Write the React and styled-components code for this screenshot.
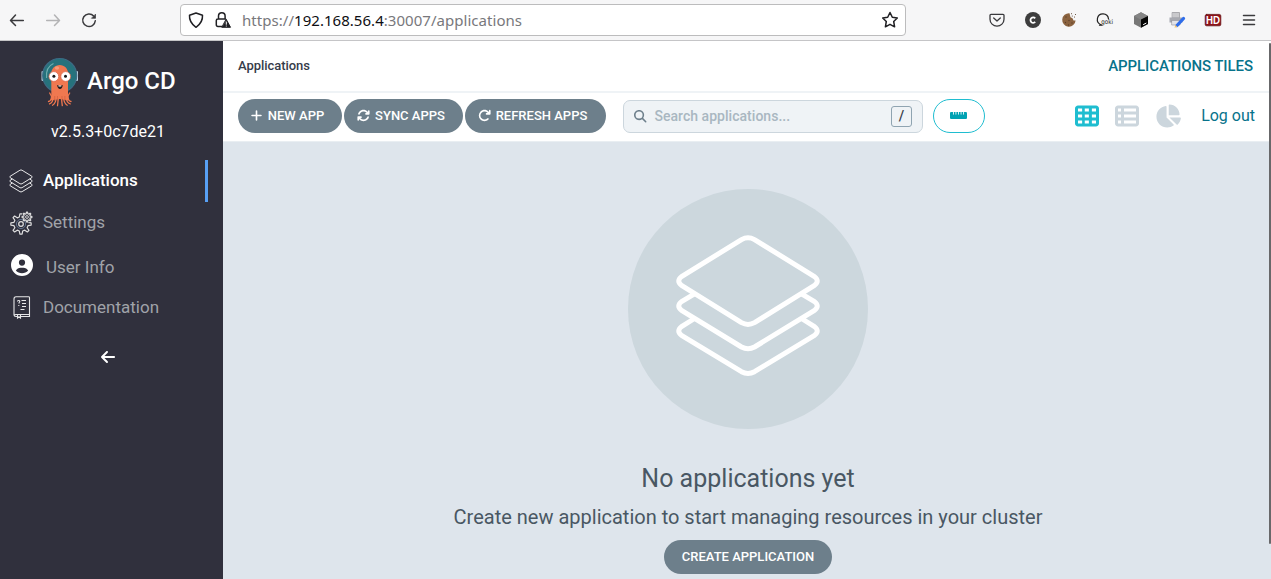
import React from 'react';
import styled, { createGlobalStyle } from 'styled-components';
import {
  FaPlus, FaArrowsRotate, FaArrowRotateRight, FaMagnifyingGlass, FaRulerHorizontal,
  FaTableCells, FaTableList, FaChartPie, FaCircleUser, FaArrowLeft,
} from 'react-icons/fa6';

const GlobalStyle = createGlobalStyle`
  * { box-sizing: border-box; }
  body { margin: 0; font-family: Roboto, "Liberation Sans", sans-serif; overflow: hidden; }
  button { font-family: inherit; border: 0; margin: 0; }
  svg { display: block; flex: none; overflow: visible; }
`;

const Window = styled.div`
  display: flex;
  flex-direction: column;
  width: 1271px;
  height: 579px;
  overflow: hidden;
`;

/* ---- browser chrome ---- */
const BrowserBar = styled.header`
  display: flex;
  align-items: center;
  height: 41px;
  flex: none;
  padding: 0 13px 1px 8px;
  background: #f6f6f7;
  border-bottom: 1px solid #c5c5c7;
`;
const NavGroup = styled.nav`
  display: flex;
  gap: 18px;
  width: 172px;
`;
const AddressBar = styled.div`
  display: flex;
  align-items: center;
  width: 726px;
  height: 32px;
  padding: 0 6px;
  background: #fff;
  border: 1px solid #bcbcbd;
  border-radius: 4px;
`;
const LockSlot = styled.div`
  margin: 0 10px 0 9px;
`;
const Url = styled.div`
  flex: 1;
  font: 15px/20px "Noto Sans", "Open Sans", sans-serif;
  letter-spacing: 0.04px;
  color: #78787c;
  white-space: nowrap;
`;
const Host = styled.span`
  color: #0e0e12;
`;
const Extensions = styled.div`
  display: flex;
  flex: 1;
  justify-content: flex-end;
  gap: 18px;
`;

/* ---- page frame ---- */
const Page = styled.div`
  display: flex;
  flex: 1;
  min-height: 0;
`;
const Sidebar = styled.aside`
  width: 223px;
  flex: none;
  background: #30303d;
`;
const Brand = styled.div`
  display: flex;
  align-items: center;
  gap: 7px;
  height: 50px;
  margin: 16px 0 0 40px;
  color: #fff;
  font-weight: 500;
  line-height: 48px;
  white-space: nowrap;
`;
const BrandName = styled.span`
  font-size: 24px;
  padding-bottom: 2px;
`;
const Version = styled.div`
  width: 216px;
  padding-top: 14px;
  height: 53px;
  text-align: center;
  color: #fff;
  font-size: 16px;
  line-height: 21px;
`;
const NavItem = styled.a`
  display: flex;
  align-items: center;
  width: 208px;
  height: ${p => p.$height || 42}px;
  padding-left: 9px;
  border-right: 3px solid ${p => (p.$active ? '#58a0f5' : 'transparent')};
  color: ${p => (p.$active ? '#fff' : '#a0a3a9')};
  font-size: 17px;
  font-weight: ${p => (p.$active ? 500 : 400)};
`;
const NavIcon = styled.span`
  width: ${p => p.$width || 34}px;
  padding-left: ${p => p.$inset || 0}px;
  padding-bottom: ${p => p.$lift || 0}px;
  color: #fff;
`;
const NavLabel = styled.span`
  padding-top: ${p => p.$drop || 0}px;
  padding-bottom: ${p => p.$lift || 0}px;
`;
const Collapse = styled.div`
  display: flex;
  justify-content: center;
  width: 215px;
  padding-top: 23px;
  color: #fff;
`;

const Main = styled.main`
  position: relative;
  display: flex;
  flex: 1;
  flex-direction: column;
  background: #dee5ec;
`;
const ScrollThumb = styled.div`
  position: absolute;
  top: 2px;
  right: 0;
  width: 2px;
  height: 501px;
  border-radius: 2px;
  background: #68686a;
`;
const TitleBar = styled.div`
  display: flex;
  align-items: center;
  justify-content: space-between;
  height: 52px;
  padding: 0 18px 1px 15px;
  background: #fff;
  border-bottom: 2px solid #eff3f6;
`;
const Crumb = styled.span`
  color: #363c4a;
  font-size: 13px;
  font-weight: 500;
  letter-spacing: -0.05px;
`;
const ViewTitle = styled.span`
  padding-top: 1px;
  color: #08738b;
  font-size: 15px;
  font-weight: 500;
  letter-spacing: -0.07px;
`;
const Toolbar = styled.div`
  display: flex;
  align-items: center;
  height: 49px;
  padding: 0 16px 3px 15px;
  background: #fff;
  border-bottom: 1px solid #e9eef2;
`;
const PillButton = styled.button`
  display: flex;
  align-items: center;
  justify-content: center;
  gap: 5px;
  width: ${p => p.$width}px;
  height: 34px;
  flex: none;
  padding: 0 ${p => p.$end || 0}px 0 0;
  margin-right: 2px;
  border-radius: 17px;
  background: #6d7f8b;
  color: #fff;
  font-size: 13px;
  font-weight: 500;
  white-space: nowrap;
`;
const CreateButton = styled(PillButton)`
  margin-right: 0;
  padding-bottom: 2px;
`;
const SearchField = styled.label`
  display: flex;
  align-items: center;
  width: 300px;
  height: 33px;
  margin: 1px 10px 0 15px;
  padding: 0 10px;
  border: 1px solid #ccd6dd;
  border-radius: 7px;
  background: #eff3f6;
  color: #6d7f8b;
`;
const Placeholder = styled.span`
  flex: 1;
  margin-left: 8px;
  color: #a9b7c1;
  font-size: 14px;
  font-weight: 500;
  letter-spacing: 0.03px;
`;
const KeyHint = styled.kbd`
  width: 21px;
  height: 21px;
  border: 1px solid #8fa4b1;
  border-radius: 3px;
  color: #363c4a;
  font: 500 14px/19px Roboto, sans-serif;
  text-align: center;
`;
const OutlinePill = styled.button`
  display: flex;
  align-items: center;
  justify-content: center;
  width: 52px;
  height: 34px;
  padding: 0 1px 1px 0;
  border: 1px solid #1fbdd0;
  border-radius: 17px;
  background: #fff;
  color: #00a2b3;
`;
const ViewSwitch = styled.div`
  display: flex;
  align-items: center;
  gap: 16px;
  margin-left: auto;
`;
const ViewIcon = styled.span`
  color: ${p => (p.$active ? '#1fbdd0' : '#ccd6dd')};
`;
const LogOut = styled.a`
  margin-left: 4px;
  color: #08738b;
  font-size: 16px;
`;
const EmptyState = styled.section`
  display: flex;
  flex-direction: column;
  align-items: center;
  padding: 47px 0 0 2px;
  color: #495763;
`;
const Disc = styled.div`
  width: 240px;
  height: 240px;
  border-radius: 50%;
  background: #ccd7dd;
`;
const Headline = styled.h4`
  margin: 33px 0 0;
  font-size: 25px;
  font-weight: 400;
  line-height: 34px;
`;
const Subline = styled.h5`
  margin: 7px 0 9px;
  font-size: 20px;
  font-weight: 400;
  line-height: 28px;
  white-space: nowrap;
`;

/* ---- drawings ---- */
const LAYERS = [
  'M113.5 50.6Q120 47 126.5 50.6L186.5 87.6Q192 92 186.5 96.4L126.5 133.6Q120 137.2 113.5 133.6L53.5 96.4Q48 92 53.5 87.6Z',
  'M66.5 104.8L53.5 112.6Q48 117 53.5 121.4L113.5 158Q120 161.6 126.5 158L186.5 121.4Q192 117 186.5 112.6L173.5 104.8',
  'M66.5 129.5L53.5 137.6Q48 142 53.5 146.4L113.5 182.7Q120 186.3 126.5 182.7L186.5 146.4Q192 142 186.5 137.6L173.5 129.5',
];
const Layers = ({ viewBox = '0 0 240 240', width = 240, height = 240, stroke = 5 }) => (
  <svg width={width} height={height} viewBox={viewBox} fill="none" stroke="#fff" strokeWidth={stroke} strokeLinejoin="round">
    {LAYERS.map(d => <path key={d} d={d} />)}
  </svg>
);

const ArgoLogo = () => (
  <svg width="40" height="50" viewBox="0 0 40 50">
    <rect x="1.5" y="14" width="3" height="10" rx="1" fill="#b9d3df" />
    <rect x="35" y="14" width="3" height="10" rx="1" fill="#b9d3df" />
    <circle cx="19.7" cy="18.5" r="17" fill="#26727c" stroke="#3d6a84" strokeWidth="1.2" />
    <path d="M6.6 21Q5.500 10 13.500 6.500" fill="none" stroke="#72aeb0" strokeWidth="1.1" />
    <path d="M11.300 37V18C10 4.500 29.500 4.500 28 18V37Q28 41 29 43.500L26 43L20 42L13 43L10.500 43.500Q11.300 41 11.300 37Z" fill="#f07850" />
    <path d="M11.500 39Q11.500 44 8.500 44.500M13.200 40Q13 46 9.500 46.800M16 40Q16.300 46 12.500 48.200M18.500 40L17.500 48.700M21.200 40L22.300 48.700M23.800 40Q23.500 46 27.200 48.200M26.300 40Q26.500 46 30.200 46.800M28 39Q28 44 31 44.500M11.300 39L9.700 36M28 39L29.700 36" fill="none" stroke="#f07850" strokeWidth="1.300" strokeLinecap="round" />
    <path d="M14.700 39V44M17.500 39V44.500M22 39V44.500M24.900 39V44" stroke="#cf5a3d" strokeWidth="0.600" />
    <ellipse cx="17" cy="11" rx="2.200" ry="1.700" fill="#f79a79" />
    <circle cx="13.800" cy="19.500" r="4.900" fill="#fff" stroke="#db5a3c" strokeWidth="0.7" />
    <circle cx="25.700" cy="19.500" r="4.900" fill="#fff" stroke="#db5a3c" strokeWidth="0.7" />
    <circle cx="13.900" cy="19.300" r="1.500" fill="#171719" />
    <circle cx="25.500" cy="19.300" r="1.500" fill="#171719" />
    <path d="M17 28Q20 29.300 22.800 28Q22.200 32 20 32Q17.800 32 17 28Z" fill="#231c1e" />
    <path d="M18.500 28.500H21.300V29.500H18.500Z" fill="#fff" />
  </svg>
);

const gearPath = (cx, cy, inner, outer, teeth) => {
  const points = [];
  for (let i = 0; i < teeth; i += 1) {
    [[-0.3, inner], [-0.14, outer], [0.14, outer], [0.3, inner]].forEach(([offset, r]) => {
      const a = ((i + offset) / teeth) * Math.PI * 2 + Math.PI / 2;
      points.push(`${(cx + r * Math.cos(a)).toFixed(2)} ${(cy + r * Math.sin(a)).toFixed(2)}`);
    });
  }
  return `M${points.join('L')}Z`;
};
const Gears = () => (
  <svg width="24" height="24" viewBox="0 0 24 24" fill="none" stroke="#dededf" strokeWidth="1.200" strokeLinejoin="round">
    <mask id="big-gear">
      <rect width="24" height="24" fill="#fff" stroke="none" />
      <circle cx="18" cy="6" r="5.800" fill="#000" stroke="none" />
    </mask>
    <path mask="url(#big-gear)" d={gearPath(12, 13, 7.200, 10.200, 8)} />
    <circle cx="12" cy="13" r="4.600" strokeWidth="0.6" stroke="#7f9cc0" />
    <circle cx="12" cy="13" r="2.300" />
    <path d={gearPath(18, 6, 3.400, 4.900, 8)} />
    <circle cx="18" cy="6" r="1.400" strokeWidth="0.9" />
  </svg>
);

const DocBook = () => (
  <svg width="18" height="23" viewBox="0 0 18 23" fill="none" stroke="#e6e6e8" strokeWidth="1.100">
    <path d="M3 18.500H16.500V1.500Q16.500 0.700 15.500 0.700H3Q1 0.700 1 3V19Q1 20.500 3 20.500H4M16.500 18.500V20.500H8M3 18.500Q1.500 18.500 1.200 19.500" />
    <path d="M4.500 18.500V22L6 20.800L7.500 22V18.500" />
    <path d="M4.500 5.500Q4.600 4.300 6 4.500Q7.500 5 6.200 6.500L5.800 7.500M5.800 9V10" />
    <path d="M8.500 4.500H13M9 7.500H13M9 10.500H13M7.500 13.500H11.500" />
  </svg>
);

const Icon = ({ children, stroke = '#3a3a3d', width = 1.5 }) => (
  <svg width="18" height="18" viewBox="0 0 18 18" fill="none" stroke={stroke} strokeWidth={width} strokeLinecap="round" strokeLinejoin="round">
    {children}
  </svg>
);
const BackIcon = () => <Icon><path d="M15.300 9.500H2.500M7.500 4L2.500 9.500L7.500 14.500" /></Icon>;
const ForwardIcon = () => <Icon stroke="#b3b3b5"><path d="M2.700 9.500H15.500M10.500 4L15.500 9.500L10.500 14.500" /></Icon>;
const ReloadIcon = () => (
  <Icon>
    <path d="M13.700 5A6.300 6.300 0 1 0 15.300 9.800" />
    <path d="M15.500 3.500V7.300H11.800Z" fill="#3a3a3d" strokeWidth="0.7" />
  </Icon>
);
const ShieldIcon = () => <Icon stroke="#202024"><path d="M9 2L15.500 4.300Q16 11.500 9 16.300Q2 11.500 2.500 4.300Z" /></Icon>;
const LockIcon = () => (
  <Icon stroke="#202024">
    <path d="M8 15.500H4Q2.300 15.500 2.300 13.800V9.500Q2.300 8 4 8H11.500M4.500 8V5A3.300 3.300 0 0 1 11.100 5V8" />
    <path d="M12.300 8.500L16.500 16.300H8.200Z" fill="#202024" strokeWidth="1" />
    <path d="M12.300 11V13.300M12.300 15V15.100" stroke="#fff" strokeWidth="1" />
  </Icon>
);
const StarIcon = () => <Icon stroke="#202024"><path d="M9 1.500L11.300 6.300L16.300 7L12.700 10.500L13.600 15.800L9 13.300L4.400 15.800L5.300 10.500L1.700 7L6.700 6.300Z" /></Icon>;
const PocketIcon = () => (
  <Icon width={1.300}><path d="M3 3.300H15Q16 3.300 16 4.300V8.300A7 6.800 0 0 1 2 8.300V4.300Q2 3.300 3 3.300ZM5.700 7L9 10L12.300 7" /></Icon>
);
const CBadge = () => (
  <Icon>
    <circle cx="9" cy="9" r="8" fill="#3d3d3d" stroke="none" />
    <path d="M11.200 7.300A2.700 2.700 0 1 0 11.200 10.900" stroke="#fff" strokeWidth="1.800" strokeLinecap="butt" />
  </Icon>
);
const CookieIcon = () => (
  <Icon>
    <path d="M9.500 2.300A6.700 6.700 0 1 0 15.600 9.500L13.500 9.500L12.500 7.200L10.500 6.200Z" fill="#8a623f" stroke="none" />
    <path d="M6 6V6.100M9 9.500V9.600M5.500 11.500V11.600M12 12V12.100M8.500 14V14.100" stroke="#5b3f29" strokeWidth="1.300" />
    <path d="M11.500 2.700V2.800M12.300 5V5.100M15.500 3.500V3.600M14.500 6V6.100" stroke="#5e4632" strokeWidth="1" />
  </Icon>
);
const GokiText = styled.text`
  font: 6.5px "DejaVu Sans", sans-serif;
  fill: #222;
  stroke: none;
`;
const GokiIcon = () => (
  <Icon stroke="#222" width={1.200}>
    <path d="M5 13.800A5.600 5.600 0 1 1 12.500 7.800" />
    <path d="M3.500 14.200H6" />
    <GokiText x="5.200" y="13.300" textLength="11.800" lengthAdjust="spacingAndGlyphs">goki</GokiText>
  </Icon>
);
const CubeIcon = () => (
  <Icon stroke="none">
    <path d="M9 1.300L16 5V13L9 16.800L2 13V5Z" fill="#777" />
    <path d="M9 1.300L16 5L9 8.800L2 5Z" fill="#858585" />
    <path d="M9 8.500L16 5V13L9 16.800Z" fill="#050505" />
    <path d="M11.500 13.500L14 12.200" stroke="#fff" strokeWidth="1" />
  </Icon>
);
const PrinterIcon = () => (
  <Icon stroke="none">
    <path d="M4.500 1.500H11.500V7H4.500Z" fill="#c9c9cc" stroke="#929297" strokeWidth="0.7" />
    <path d="M1.500 6.500H14.500V11.500H1.500Z" fill="#a7a9b0" />
    <path d="M4 9.500H12V14H4Z" fill="#e3e3e7" stroke="#929297" strokeWidth="0.6" />
    <path d="M9 14.500L15.500 7.500" stroke="#2f6dea" strokeWidth="3.300" />
    <path d="M6.500 16.800L7.300 13.900L9.500 15.800Z" fill="#f2c46b" />
  </Icon>
);
const HdText = styled.text`
  font: bold 11px "Liberation Sans", sans-serif;
  fill: #fff;
  stroke: none;
`;
const HdIcon = () => (
  <Icon>
    <rect x="1.200" y="3.400" width="15.600" height="11.400" rx="1.500" fill="#8f1218" stroke="#651317" strokeWidth="0.8" />
    <HdText x="2" y="13" textLength="14" lengthAdjust="spacingAndGlyphs">HD</HdText>
  </Icon>
);
const MenuIcon = () => <Icon><path d="M3.500 4.500H14.500M3.500 9H14.500M3.500 13.500H14.500" /></Icon>;

export default function App() {
  return (
    <Window>
      <GlobalStyle />
      <BrowserBar>
        <NavGroup><BackIcon /><ForwardIcon /><ReloadIcon /></NavGroup>
        <AddressBar>
          <ShieldIcon />
          <LockSlot><LockIcon /></LockSlot>
          <Url>https://<Host>192.168.56.4</Host>:30007/applications</Url>
          <StarIcon />
        </AddressBar>
        <Extensions>
          <PocketIcon /><CBadge /><CookieIcon /><GokiIcon /><CubeIcon /><PrinterIcon /><HdIcon /><MenuIcon />
        </Extensions>
      </BrowserBar>
      <Page>
        <Sidebar>
          <Brand><ArgoLogo /><BrandName>Argo CD</BrandName></Brand>
          <Version>v2.5.3+0c7de21</Version>
          <NavItem $active>
            <NavIcon><Layers viewBox="46 43 148 148" width={24} height={24} stroke={5.5} /></NavIcon>
            <NavLabel $lift={2}>Applications</NavLabel>
          </NavItem>
          <NavItem>
            <NavIcon><Gears /></NavIcon>
            <NavLabel $lift={2}>Settings</NavLabel>
          </NavItem>
          <NavItem $height={44}>
            <NavIcon $width={37} $inset={2} $lift={3}><FaCircleUser size={22} /></NavIcon>
            <NavLabel $drop={1}>User Info</NavLabel>
          </NavItem>
          <NavItem $height={38}>
            <NavIcon $inset={4}><DocBook /></NavIcon>
            <NavLabel $lift={1}>Documentation</NavLabel>
          </NavItem>
          <Collapse><FaArrowLeft size={16} /></Collapse>
        </Sidebar>
        <Main>
          <TitleBar>
            <Crumb>Applications</Crumb>
            <ViewTitle>APPLICATIONS TILES</ViewTitle>
          </TitleBar>
          <Toolbar>
            <PillButton $width={104} $end={6}><FaPlus size={13} />NEW APP</PillButton>
            <PillButton $width={119} $end={5}><FaArrowsRotate size={13} />SYNC APPS</PillButton>
            <PillButton $width={141} $end={6}><FaArrowRotateRight size={13} />REFRESH APPS</PillButton>
            <SearchField>
              <FaMagnifyingGlass size={12.5} />
              <Placeholder>Search applications...</Placeholder>
              <KeyHint>/</KeyHint>
            </SearchField>
            <OutlinePill><FaRulerHorizontal size={17} /></OutlinePill>
            <ViewSwitch>
              <ViewIcon $active><FaTableCells size={24} /></ViewIcon>
              <ViewIcon><FaTableList size={24} /></ViewIcon>
              <ViewIcon><FaChartPie size={26} /></ViewIcon>
              <LogOut>Log out</LogOut>
            </ViewSwitch>
          </Toolbar>
          <EmptyState>
            <Disc><Layers /></Disc>
            <Headline>No applications yet</Headline>
            <Subline>Create new application to start managing resources in your cluster</Subline>
            <CreateButton $width={168}>CREATE APPLICATION</CreateButton>
          </EmptyState>
          <ScrollThumb />
        </Main>
      </Page>
    </Window>
  );
}
